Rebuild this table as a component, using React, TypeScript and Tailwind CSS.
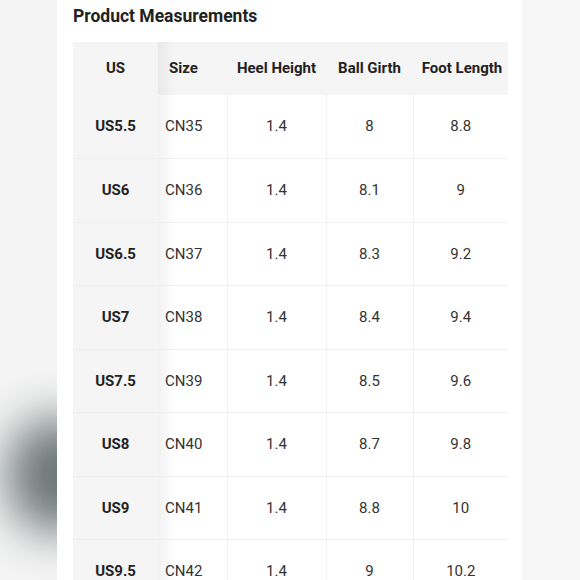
import React from 'react';

type Row = {
  us: string;
  size: string;
  heel: string;
  ball: string;
  foot: string;
};

const rows: Row[] = [
  { us: 'US5.5', size: 'CN35', heel: '1.4', ball: '8', foot: '8.8' },
  { us: 'US6', size: 'CN36', heel: '1.4', ball: '8.1', foot: '9' },
  { us: 'US6.5', size: 'CN37', heel: '1.4', ball: '8.3', foot: '9.2' },
  { us: 'US7', size: 'CN38', heel: '1.4', ball: '8.4', foot: '9.4' },
  { us: 'US7.5', size: 'CN39', heel: '1.4', ball: '8.5', foot: '9.6' },
  { us: 'US8', size: 'CN40', heel: '1.4', ball: '8.7', foot: '9.8' },
  { us: 'US9', size: 'CN41', heel: '1.4', ball: '8.8', foot: '10' },
  { us: 'US9.5', size: 'CN42', heel: '1.4', ball: '9', foot: '10.2' },
];

const stickyCell =
  "relative bg-[#f5f5f5] w-[85px] text-center font-bold text-[#222] after:absolute after:inset-y-0 after:left-full after:w-[18px] after:bg-gradient-to-r after:from-black/[0.05] after:to-transparent after:content-['']";

export default function App() {
  return (
    <div
      className="flex h-[580px] w-[580px] overflow-hidden bg-[#f7f7f7]"
      style={{ fontFamily: 'Roboto, "Liberation Sans", sans-serif' }}
    >
      {/* franja izquierda difuminada */}
      <div className="flex w-[57px] shrink-0 flex-col overflow-hidden bg-[#f4f4f4]">
        <div className="h-[418px]" />
        <div className="ml-[8px] h-[115px] w-[100px] rounded-full bg-[#6a7374] blur-xl" />
      </div>

      <div className="w-[465px] shrink-0 bg-white pl-4">
        <h2 className="pt-[5px] text-[17.5px] font-bold leading-[22px] text-[#222]">
          Product Measurements
        </h2>

        <table className="mt-[15px] w-[435px] table-fixed border-collapse text-[15px]">
          <thead>
            <tr className="h-[53px] bg-[#f5f5f5]">
              <th className={stickyCell}>US</th>
              <th className="w-[69px] pl-[11px] text-left font-bold text-[#222]">Size</th>
              <th className="w-[99px] text-center font-bold text-[#222]">Heel Height</th>
              <th className="w-[87px] text-center font-bold text-[#222]">Ball Girth</th>
              <th className="w-[95px] pl-[3px] text-center font-bold text-[#222]">Foot Length</th>
            </tr>
          </thead>
          <tbody>
            {rows.map((r) => (
              <tr key={r.us} className="h-[63.5px] border-b border-[#f0f0f0]">
                <td className={stickyCell}>{r.us}</td>
                <td className="pl-[7px] text-left text-[#333]">{r.size}</td>
                <td className="border-l border-[#f0f0f0] text-center text-[#333]">{r.heel}</td>
                <td className="border-l border-[#f0f0f0] text-center text-[#333]">{r.ball}</td>
                <td className="border-l border-[#f0f0f0] text-center text-[#333]">{r.foot}</td>
              </tr>
            ))}
          </tbody>
        </table>
      </div>

      <div className="flex-1 bg-[#f7f7f7]" />
    </div>
  );
}
